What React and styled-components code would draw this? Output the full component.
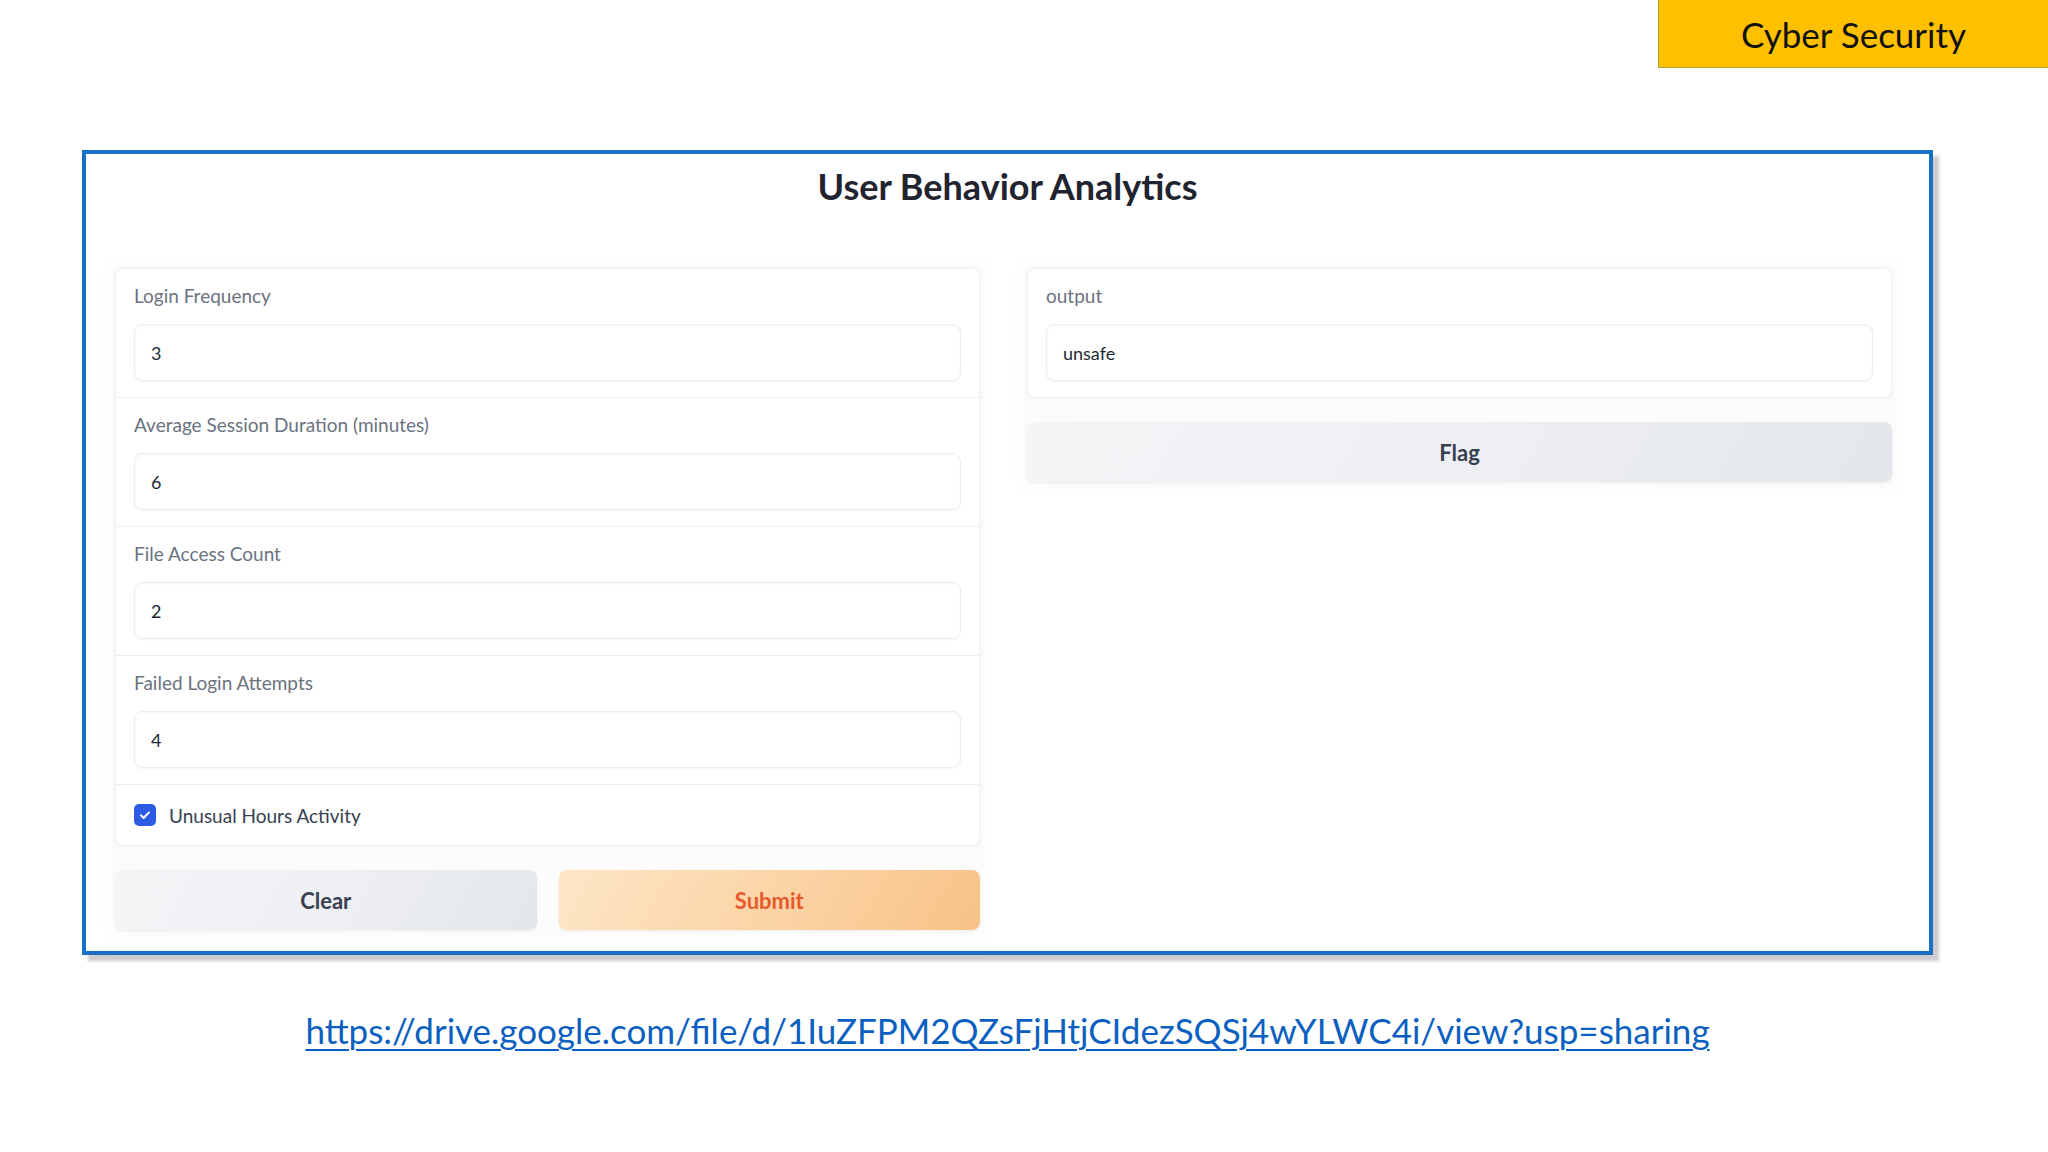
import React from "react";
import styled, { createGlobalStyle } from "styled-components";

const GlobalStyle = createGlobalStyle`
  html, body {
    margin: 0;
    padding: 0;
    background: #ffffff;
  }
  body {
    font-family: Lato, "Noto Sans", sans-serif;
  }
`;

const fields = [
  { label: "Login Frequency", value: "3" },
  { label: "Average Session Duration (minutes)", value: "6" },
  { label: "File Access Count", value: "2" },
  { label: "Failed Login Attempts", value: "4" },
];

function App() {
  return (
    <Page>
      <GlobalStyle />
      <TopBar>
        <Tag>Cyber Security</Tag>
      </TopBar>

      <Frame>
        <Title>User Behavior Analytics</Title>
        <Columns>
          <Column>
            <Card>
              {fields.map((f) => (
                <FieldRow key={f.label}>
                  <Label>{f.label}</Label>
                  <Input>{f.value}</Input>
                </FieldRow>
              ))}
              <CheckRow>
                <Box>
                  <svg width="14" height="14" viewBox="0 0 14 14">
                    <path
                      d="M3 7.4l2.6 2.6L11 4.4"
                      fill="none"
                      stroke="#fff"
                      strokeWidth="2"
                      strokeLinecap="round"
                      strokeLinejoin="round"
                    />
                  </svg>
                </Box>
                <CheckLabel>Unusual Hours Activity</CheckLabel>
              </CheckRow>
            </Card>
            <ButtonRow>
              <Button>Clear</Button>
              <Button primary>Submit</Button>
            </ButtonRow>
          </Column>

          <Column>
            <Card>
              <FieldRow last>
                <Label>output</Label>
                <Input>unsafe</Input>
              </FieldRow>
            </Card>
            <Button>Flag</Button>
          </Column>
        </Columns>
      </Frame>

      <LinkLine>
        <Link href="#">
          https://drive.google.com/file/d/1IuZFPM2QZsFjHtjCIdezSQSj4wYLWC4i/view?usp=sharing
        </Link>
      </LinkLine>
    </Page>
  );
}

export default App;

const Page = styled.div`
  width: 2048px;
  height: 1152px;
  display: flex;
  flex-direction: column;
  overflow: hidden;
`;

const TopBar = styled.div`
  display: flex;
  justify-content: flex-end;
`;

const Tag = styled.div`
  width: 390px;
  height: 68px;
  box-sizing: border-box;
  background: #ffc000;
  border-left: 1px solid #a8a83a;
  border-bottom: 1px solid #a8a83a;
  display: flex;
  align-items: center;
  justify-content: center;
  font-family: Lato, "Liberation Sans", sans-serif;
  font-size: 35px;
  color: #111;
`;

const Frame = styled.div`
  margin: 82px 0 0 82px;
  width: 1851px;
  height: 805px;
  box-sizing: border-box;
  border: 4px solid #1770c2;
  box-shadow: 6px 6px 3px rgba(90, 80, 100, 0.3);
  display: flex;
  flex-direction: column;
  background: #ffffff;
`;

const Title = styled.h1`
  margin: 0;
  padding-top: 12px;
  height: 114px;
  box-sizing: border-box;
  line-height: 40px;
  text-align: center;
  font-family: Lato, "Noto Sans", sans-serif;
  font-weight: 700;
  font-size: 36px;
  color: #1f2430;
`;

const Columns = styled.div`
  display: grid;
  grid-template-columns: 865px 865px;
  column-gap: 47px;
  padding: 0 36px 0 29px;
  align-items: start;
`;

const Column = styled.div`
  display: flex;
  flex-direction: column;
  gap: 24px;
  background: #fcfcfd;
  box-shadow: 0 0 14px 6px #fafafb;
`;

const Card = styled.div`
  background: #ffffff;
  border: 1px solid #eef0f3;
  border-radius: 8px;
  box-shadow: 0 1px 4px rgba(0, 0, 0, 0.05);
  display: flex;
  flex-direction: column;
`;

const FieldRow = styled.div`
  display: flex;
  flex-direction: column;
  gap: 16px;
  padding: 15px 18px 16px;
  border-bottom: ${(p) => (p.last ? "none" : "1px solid #eceef1")};
`;

const Label = styled.div`
  font-size: 19px;
  line-height: 24px;
  color: #6b7280;
`;

const Input = styled.div`
  height: 57px;
  box-sizing: border-box;
  padding: 0 16px;
  display: flex;
  align-items: center;
  border: 1px solid #eceef1;
  border-radius: 8px;
  box-shadow: inset 0 1px 3px rgba(0, 0, 0, 0.04), 0 1px 2px rgba(0, 0, 0, 0.04);
  font-size: 18px;
  color: #1f2937;
`;

const CheckRow = styled.div`
  height: 60px;
  display: flex;
  align-items: center;
  gap: 13px;
  padding: 0 18px;
`;

const Box = styled.div`
  width: 22px;
  height: 22px;
  border-radius: 5px;
  background: #2d5be3;
  display: flex;
  align-items: center;
  justify-content: center;
`;

const CheckLabel = styled.div`
  font-size: 19px;
  color: #374151;
`;

const ButtonRow = styled.div`
  display: grid;
  grid-template-columns: 1fr 1fr;
  gap: 22px;
`;

const Button = styled.div`
  height: 60px;
  border-radius: 8px;
  display: flex;
  align-items: center;
  justify-content: center;
  font-size: 22px;
  font-weight: 700;
  color: ${(p) => (p.primary ? "#e65a2b" : "#374151")};
  background: ${(p) =>
    p.primary
      ? "linear-gradient(120deg, #fde6c6 0%, #fbd3a4 55%, #f8c286 100%)"
      : "linear-gradient(120deg, #f4f5f7 0%, #eceef1 60%, #e3e6ea 100%)"};
  box-shadow: 0 1px 3px rgba(0, 0, 0, 0.06);
`;

const LinkLine = styled.div`
  width: 1851px;
  margin-left: 82px;
  margin-top: 53px;
  text-align: center;
  line-height: 44px;
`;

const Link = styled.a`
  font-family: Lato, "Liberation Sans", sans-serif;
  font-size: 35px;
  color: #0b5fc0;
  text-decoration: underline;
  text-underline-offset: 5px;
  text-decoration-thickness: 2px;
`;
